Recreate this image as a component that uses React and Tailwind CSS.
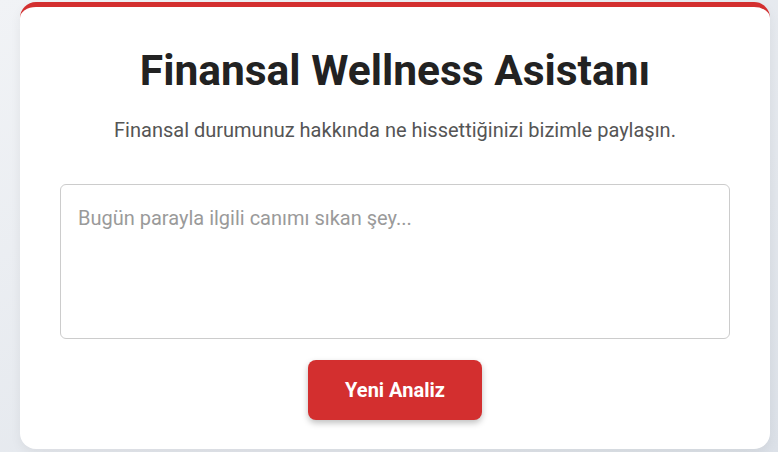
// App.jsx — Finansal Wellness Asistanı kartı

export default function App() {
  return (
    <div
      className="min-h-[452px] w-full bg-gradient-to-br from-[#f1f3f6] to-[#dce1e8] pl-[20px] pr-[8px] pt-[2px]"
      style={{ fontFamily: 'Roboto, "Noto Sans", sans-serif' }}
    >
      <div className="w-[750px] h-[447px] bg-white rounded-[16px] border-t-[5px] border-[#d32f2f] px-[40px] pt-[38px] shadow-[0_4px_12px_rgba(0,0,0,0.06)] flex flex-col items-center">
        <h1 className="text-[42.5px] leading-[52px] font-bold text-[#222]">
          Finansal Wellness Asistanı
        </h1>
        <p className="mt-[20px] text-[20px] leading-[26px] text-[#555]">
          Finansal durumunuz hakkında ne hissettiğinizi bizimle paylaşın.
        </p>

        <textarea
          className="mt-[41px] w-full h-[155px] resize-none rounded-[6px] border border-[#ccc] px-[17px] py-[20px] text-[20px] leading-[26px] text-[#333] placeholder:text-[#9a9a9a] outline-none"
          placeholder="Bugün parayla ilgili canımı sıkan şey..."
        />

        <button className="mt-[21px] w-[174px] h-[60px] rounded-[8px] bg-[#d32f2f] text-white text-[20px] font-bold shadow-[0_3px_6px_rgba(0,0,0,0.25)]">
          Yeni Analiz
        </button>
      </div>
    </div>
  )
}
